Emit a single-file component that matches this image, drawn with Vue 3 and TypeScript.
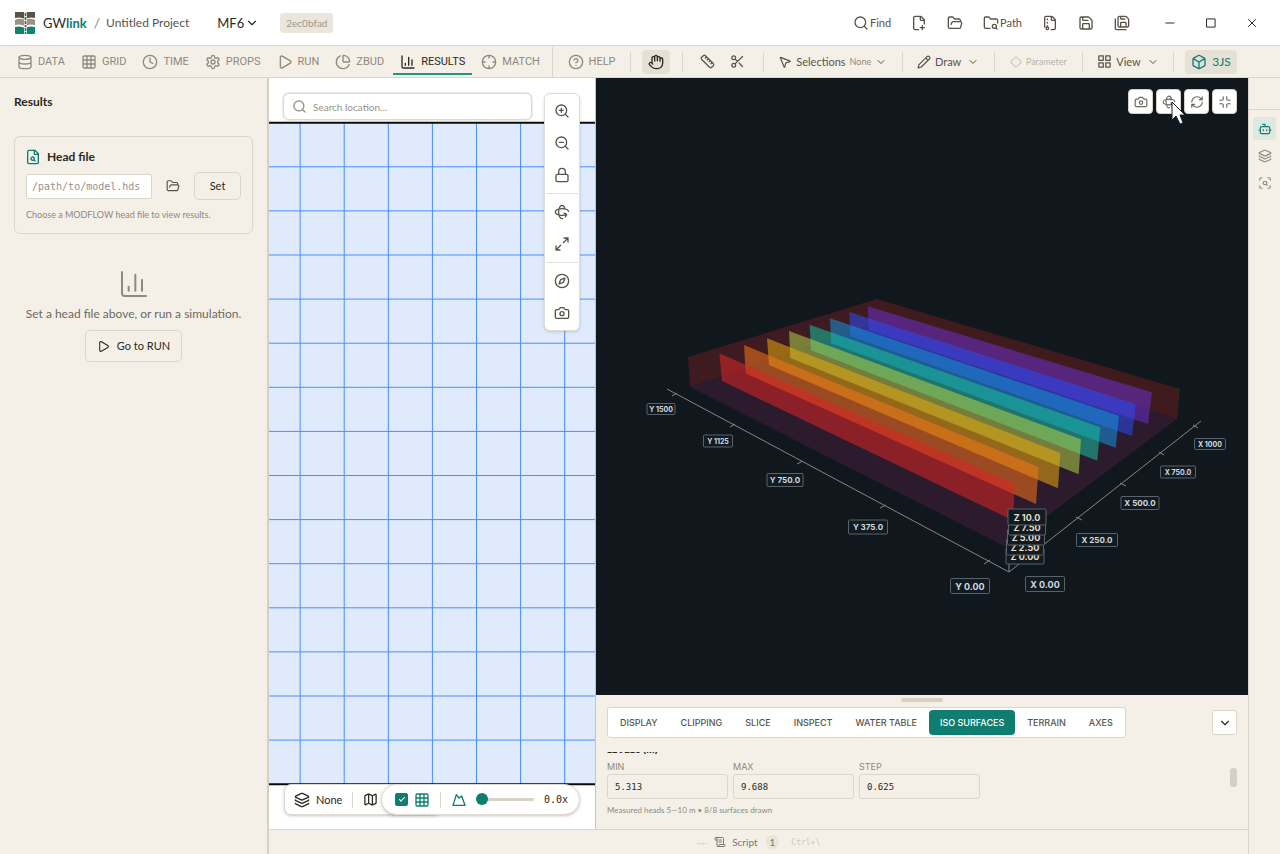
<script setup lang="ts">
import { h, ref, type FunctionalComponent } from 'vue'

const circle = (cx: number, cy: number, r: number): string =>
  `M${cx - r} ${cy}a${r} ${r} 0 1 0 ${2 * r} 0a${r} ${r} 0 1 0 ${-2 * r} 0`

const paths: Record<string, string> = {
  data: 'M3 5a9 3 0 1 0 18 0a9 3 0 1 0-18 0M3 5V19A9 3 0 0 0 21 19V5M3 12A9 3 0 0 0 21 12',
  grid: 'M5 3h14a2 2 0 0 1 2 2v14a2 2 0 0 1-2 2H5a2 2 0 0 1-2-2V5a2 2 0 0 1 2-2zM3 9h18M3 15h18M9 3v18M15 3v18',
  time: circle(12, 12, 10) + 'M12 6v6l4 2',
  props:
    'M12.22 2h-.44a2 2 0 0 0-2 2v.18a2 2 0 0 1-1 1.73l-.43.25a2 2 0 0 1-2 0l-.15-.08a2 2 0 0 0-2.73.73l-.22.38a2 2 0 0 0 .73 2.73l.15.1a2 2 0 0 1 1 1.72v.51a2 2 0 0 1-1 1.74l-.15.09a2 2 0 0 0-.73 2.73l.22.38a2 2 0 0 0 2.73.73l.15-.08a2 2 0 0 1 2 0l.43.25a2 2 0 0 1 1 1.73V20a2 2 0 0 0 2 2h.44a2 2 0 0 0 2-2v-.18a2 2 0 0 1 1-1.73l.43-.25a2 2 0 0 1 2 0l.15.08a2 2 0 0 0 2.73-.73l.22-.39a2 2 0 0 0-.73-2.73l-.15-.08a2 2 0 0 1-1-1.74v-.5a2 2 0 0 1 1-1.74l.15-.09a2 2 0 0 0 .73-2.73l-.22-.38a2 2 0 0 0-2.73-.73l-.15.08a2 2 0 0 1-2 0l-.43-.25a2 2 0 0 1-1-1.73V4a2 2 0 0 0-2-2z' +
    circle(12, 12, 3),
  run: 'M5 5a2 2 0 0 1 3.008-1.728l11.997 6.998a2 2 0 0 1 .003 3.458l-12 7A2 2 0 0 1 5 19z',
  zbud: 'M21 12c.552 0 1.005-.449.95-.998a10 10 0 0 0-8.953-8.951c-.55-.055-.998.398-.998.95v8a1 1 0 0 0 1 1zM21.21 15.89A10 10 0 1 1 8 2.83',
  results: 'M3 3v16a2 2 0 0 0 2 2h16M18 17V9M13 17V5M8 17v-3',
  match: circle(12, 12, 10) + 'M22 12h-4M6 12H2M12 6V2M12 22v-4',
  help: circle(12, 12, 10) + 'M9.09 9a3 3 0 0 1 5.83 1c0 2-3 3-3 3M12 17h.01',
  hand: 'M18 11V6a2 2 0 0 0-4 0M14 10V4a2 2 0 0 0-4 0v2M10 10.5V6a2 2 0 0 0-4 0v8M18 8a2 2 0 1 1 4 0v6a8 8 0 0 1-8 8h-2c-2.8 0-4.5-.86-5.99-2.34l-3.6-3.6a2 2 0 0 1 2.83-2.82L7 15',
  ruler:
    'M21.3 15.3a2.4 2.4 0 0 1 0 3.4l-2.6 2.6a2.4 2.4 0 0 1-3.4 0L2.7 8.7a2.41 2.41 0 0 1 0-3.4l2.6-2.6a2.41 2.41 0 0 1 3.4 0ZM14.5 12.5l2-2M11.5 9.5l2-2M8.5 6.5l2-2M17.5 15.5l2-2',
  scissors: circle(6, 6, 3) + 'M8.12 8.12 12 12M20 4 8.12 15.88' + circle(6, 18, 3) + 'M14.8 14.8 20 20',
  pointer:
    'M4.037 4.688a.495.495 0 0 1 .651-.651l16 6.5a.5.5 0 0 1-.063.947l-6.124 1.58a2 2 0 0 0-1.438 1.435l-1.579 6.126a.5.5 0 0 1-.947.063z',
  pencil:
    'M21.174 6.812a1 1 0 0 0-3.986-3.987L3.842 16.174a2 2 0 0 0-.5.83l-1.321 4.352a.5.5 0 0 0 .623.622l4.353-1.32a2 2 0 0 0 .83-.497zM15 5l4 4',
  diamond:
    'M2.7 10.3a2.41 2.41 0 0 0 0 3.41l7.59 7.59a2.41 2.41 0 0 0 3.41 0l7.59-7.59a2.41 2.41 0 0 0 0-3.41l-7.59-7.59a2.41 2.41 0 0 0-3.41 0Z',
  view: 'M4 3h6v7H3V4a1 1 0 0 1 1-1zM14 3h6a1 1 0 0 1 1 1v6h-7zM14 14h7v6a1 1 0 0 1-1 1h-6zM3 14h7v7H4a1 1 0 0 1-1-1z',
  box: 'M21 8a2 2 0 0 0-1-1.73l-7-4a2 2 0 0 0-2 0l-7 4A2 2 0 0 0 3 8v8a2 2 0 0 0 1 1.73l7 4a2 2 0 0 0 2 0l7-4A2 2 0 0 0 21 16ZM3.3 7l8.7 5 8.7-5M12 22V12',
  chevron: 'M6 9l6 6 6-6',
  search: circle(11, 11, 8) + 'M21 21l-4.3-4.3',
  filePlus:
    'M11.35 22H6a2 2 0 0 1-2-2V4a2 2 0 0 1 2-2h8a2.4 2.4 0 0 1 1.706.706l3.588 3.588A2.4 2.4 0 0 1 20 8v5.35M14 2v5a1 1 0 0 0 1 1h5M14 19h6M17 16v6',
  folder:
    'M6 14l1.5-2.9A2 2 0 0 1 9.24 10H20a2 2 0 0 1 1.94 2.5l-1.54 6a2 2 0 0 1-1.95 1.5H4a2 2 0 0 1-2-2V5a2 2 0 0 1 2-2h3.9a2 2 0 0 1 1.69.9l.81 1.2a2 2 0 0 0 1.67.9H18a2 2 0 0 1 2 2v2',
  folderSearch:
    'M10.7 20H4a2 2 0 0 1-2-2V5a2 2 0 0 1 2-2h3.9a2 2 0 0 1 1.69.9l.81 1.2a2 2 0 0 0 1.67.9H20a2 2 0 0 1 2 2v4.1M21 21l-1.9-1.9' +
    circle(17, 17, 3),
  archive:
    'M14 2v5a1 1 0 0 0 1 1h5M14 22h4a2 2 0 0 0 2-2V8a2.4 2.4 0 0 0-.706-1.706l-3.588-3.588A2.4 2.4 0 0 0 14 2H6a2 2 0 0 0-2 2v14M8 6v1M8 11v1M8 16v1' +
    circle(8, 20, 2),
  save: 'M15.2 3a2 2 0 0 1 1.4.6l3.8 3.8a2 2 0 0 1 .6 1.4V19a2 2 0 0 1-2 2H5a2 2 0 0 1-2-2V5a2 2 0 0 1 2-2zM17 21v-7a1 1 0 0 0-1-1H8a1 1 0 0 0-1 1v7M7 3v4a1 1 0 0 0 1 1h7',
  saveAll:
    'M10 2v3a1 1 0 0 0 1 1h5M18 18v-6a1 1 0 0 0-1-1h-6a1 1 0 0 0-1 1v6M18 22H4a2 2 0 0 1-2-2V6M8 18a2 2 0 0 1-2-2V4a2 2 0 0 1 2-2h9.172a2 2 0 0 1 1.414.586l2.828 2.828A2 2 0 0 1 22 6.828V16a2 2 0 0 1-2.01 2z',
  minimise: 'M5 12h14',
  maximise: 'M5 5h14v14H5z',
  close: 'M18 6 6 18M6 6l12 12',
  zoomIn: circle(11, 11, 8) + 'M21 21l-4.3-4.3M11 8v6M8 11h6',
  zoomOut: circle(11, 11, 8) + 'M21 21l-4.3-4.3M8 11h6',
  lock: 'M5 11h14a2 2 0 0 1 2 2v7a2 2 0 0 1-2 2H5a2 2 0 0 1-2-2v-7a2 2 0 0 1 2-2zM7 11V7a5 5 0 0 1 10 0v4',
  rotate:
    'M16.466 7.5C15.643 4.237 13.952 2 12 2 9.239 2 7 6.477 7 12s2.239 10 5 10c.342 0 .677-.069 1-.2M15.194 13.707l3.814 1.86-1.86 3.814M19 15.57c-1.804.885-4.274 1.43-7 1.43-5.523 0-10-2.239-10-5s4.477-5 10-5c4.838 0 8.873 1.718 9.8 4',
  expand: 'M15 3h6v6M21 3l-7 7M3 21l7-7M9 21H3v-6',
  compass:
    circle(12, 12, 10) +
    'M16.24 7.76l-1.804 5.411a2 2 0 0 1-1.265 1.265L7.76 16.24l1.804-5.411a2 2 0 0 1 1.265-1.265z',
  camera:
    'M14.5 4h-5L7 7H4a2 2 0 0 0-2 2v9a2 2 0 0 0 2 2h16a2 2 0 0 0 2-2V9a2 2 0 0 0-2-2h-3l-2.5-3z' +
    circle(12, 13, 3),
  refresh:
    'M3 12a9 9 0 0 1 9-9 9.75 9.75 0 0 1 6.74 2.74L21 8M21 3v5h-5M21 12a9 9 0 0 1-9 9 9.75 9.75 0 0 1-6.74-2.74L3 16M8 16H3v5',
  shrink: 'M9 3v4a2 2 0 0 1-2 2H3M21 9h-4a2 2 0 0 1-2-2V3M3 15h4a2 2 0 0 1 2 2v4M15 21v-4a2 2 0 0 1 2-2h4',
  bot: 'M12 8V4H8M6 8h12a2 2 0 0 1 2 2v8a2 2 0 0 1-2 2H6a2 2 0 0 1-2-2v-8a2 2 0 0 1 2-2zM2 14h2M20 14h2M15 13v2M9 13v2',
  layers:
    'M12.83 2.18a2 2 0 0 0-1.66 0L2.6 6.08a1 1 0 0 0 0 1.83l8.58 3.91a2 2 0 0 0 1.66 0l8.58-3.9a1 1 0 0 0 0-1.83zM2 12a1 1 0 0 0 .58.91l8.6 3.91a2 2 0 0 0 1.65 0l8.58-3.9A1 1 0 0 0 22 12M2 17a1 1 0 0 0 .58.91l8.6 3.91a2 2 0 0 0 1.65 0l8.58-3.9A1 1 0 0 0 22 17',
  scan:
    'M3 7V5a2 2 0 0 1 2-2h2M17 3h2a2 2 0 0 1 2 2v2M21 17v2a2 2 0 0 1-2 2h-2M7 21H5a2 2 0 0 1-2-2v-2M16 16l-1.9-1.9' +
    circle(12, 12, 3),
  map: 'M14.106 5.553a2 2 0 0 0 1.788 0l3.659-1.83A1 1 0 0 1 21 4.619v12.764a1 1 0 0 1-.553.894l-4.553 2.277a2 2 0 0 1-1.788 0l-4.212-2.106a2 2 0 0 0-1.788 0l-3.659 1.83A1 1 0 0 1 3 19.381V6.618a1 1 0 0 1 .553-.894l4.553-2.277a2 2 0 0 1 1.788 0zM15 5.764v15M9 3.236v15',
  terrain: 'M3 20 8 4l4 5 4-3 5 14z',
  script:
    'M15 12h-5M15 8h-5M19 17V5a2 2 0 0 0-2-2H4M8 21h12a2 2 0 0 0 2-2v-1a1 1 0 0 0-1-1H11a1 1 0 0 0-1 1v1a2 2 0 1 1-4 0V5a2 2 0 1 0-4 0v2a1 1 0 0 0 1 1h3',
  fileSearch:
    'M14 2v5a1 1 0 0 0 1 1h5M15 2H6a2 2 0 0 0-2 2v16a2 2 0 0 0 2 2h12a2 2 0 0 0 2-2V7z' +
    circle(11.5, 14.5, 2.5) +
    'M13.3 16.3 15 18',
}

const Icon: FunctionalComponent<{ name: string; size?: number; weight?: number }> = (p) =>
  h(
    'svg',
    {
      width: p.size ?? 16,
      height: p.size ?? 16,
      viewBox: '0 0 24 24',
      fill: 'none',
      stroke: 'currentColor',
      'stroke-width': p.weight ?? 2,
      'stroke-linecap': 'round',
      'stroke-linejoin': 'round',
      'aria-hidden': 'true',
    },
    [h('path', { d: paths[p.name] })],
  )
Icon.props = ['name', 'size', 'weight']

const tabs = [
  { id: 'data', label: 'DATA' },
  { id: 'grid', label: 'GRID' },
  { id: 'time', label: 'TIME' },
  { id: 'props', label: 'PROPS' },
  { id: 'run', label: 'RUN' },
  { id: 'zbud', label: 'ZBUD' },
  { id: 'results', label: 'RESULTS' },
  { id: 'match', label: 'MATCH' },
]
const activeTab = ref('results')

const viewTabs = ['DISPLAY', 'CLIPPING', 'SLICE', 'INSPECT', 'WATER TABLE', 'ISO SURFACES', 'TERRAIN', 'AXES']
const activeView = ref('ISO SURFACES')

const engine = ref('MF6')
const headPath = ref('')
const place = ref('')
const showGrid = ref(true)
const exaggeration = ref(0)

const levels = ref([
  { id: 'min', label: 'MIN', value: '5.313' },
  { id: 'max', label: 'MAX', value: '9.688' },
  { id: 'step', label: 'STEP', value: '0.625' },
])

const mapTools = [
  [
    { icon: 'zoomIn', label: 'Zoom in' },
    { icon: 'zoomOut', label: 'Zoom out' },
    { icon: 'lock', label: 'Lock view' },
  ],
  [
    { icon: 'rotate', label: 'Rotate' },
    { icon: 'expand', label: 'Fit extent' },
  ],
  [
    { icon: 'compass', label: 'North up' },
    { icon: 'camera', label: 'Capture map' },
  ],
]

// Model grid in map pixels: 15 rows of square cells.
const cell = 44.1
const gridTop = 44.7
const gridBottom = gridTop + cell * 15
const columns = Array.from({ length: 60 }, (_, i) => 31.1 + i * cell)
const rows = Array.from({ length: 14 }, (_, i) => gridTop + (i + 1) * cell)

// Head iso surfaces, back to front.
const surfaces = [
  { color: '#6b2dc8', points: '867.7,306.3 1152,392.3 1148,424 868.7,330' },
  { color: '#2c4cf0', points: '849.3,312 1135.7,404 1132,436 850.2,336' },
  { color: '#1691da', points: '830,318.3 1119,415.7 1115.7,447.7 831,343.3' },
  { color: '#16c19e', points: '809.7,324.7 1100.3,427.3 1097.3,460.7 811,350.3' },
  { color: '#b0cf48', points: '789,331 1081,439.3 1078.7,474.3 790.3,358' },
  { color: '#e9a90d', points: '767,338.3 1060.3,453 1058,488.3 769,365' },
  { color: '#f57418', points: '744,345 1038.7,467 1036,504 745.6,373.3' },
  { color: '#dc2626', points: '719.3,353.3 1015,483.7 1012.7,520.3 722,381' },
]

interface AxisLabel { text: string; x: number; y: number; w: number; h: number; size: number; z?: boolean }
const axisLabels: AxisLabel[] = [
  { text: 'Y 1500', x: 661, y: 409, w: 28, h: 11, size: 7 },
  { text: 'Y 1125', x: 718, y: 441, w: 29, h: 12, size: 7 },
  { text: 'Y 750.0', x: 785, y: 480, w: 36, h: 13, size: 8 },
  { text: 'Y 375.0', x: 868, y: 527, w: 39, h: 14, size: 8 },
  { text: 'Y 0.00', x: 970, y: 586, w: 39, h: 15, size: 9 },
  { text: 'X 0.00', x: 1045, y: 584, w: 39, h: 15, size: 9 },
  { text: 'X 250.0', x: 1097, y: 540, w: 41, h: 13, size: 8 },
  { text: 'X 500.0', x: 1140, y: 503, w: 38, h: 13, size: 8 },
  { text: 'X 750.0', x: 1178, y: 472, w: 35, h: 12, size: 7 },
  { text: 'X 1000', x: 1210, y: 444, w: 31, h: 11, size: 7 },
  { text: 'Z 0.00', x: 1025, y: 556, w: 38, h: 16, size: 9, z: true },
  { text: 'Z 2.50', x: 1025, y: 547, w: 37, h: 16, size: 9, z: true },
  { text: 'Z 5.00', x: 1026, y: 537, w: 37, h: 16, size: 9, z: true },
  { text: 'Z 7.50', x: 1027, y: 527, w: 37, h: 16, size: 9, z: true },
  { text: 'Z 10.0', x: 1027, y: 517, w: 38, h: 16, size: 9, z: true },
]
</script>

<template>
  <div class="app">
    <header class="titlebar">
      <svg class="logo" width="22" height="22" viewBox="0 0 22 22" aria-hidden="true">
        <path fill="#57534a" d="M1 0h20v6q-4-1-7 0-3 1-6 0-3-1-7 0z" />
        <path fill="#9a9287" d="M1 8q4-2 7-1 3 1 6 0 3-1 7 1v5q-4-1-7 0-3 1-6 0-3-1-7 0z" />
        <path fill="#0f8272" d="M1 15q4-1 7 0 3 1 6 0 3-1 7 0v6a1 1 0 0 1-1 1H2a1 1 0 0 1-1-1z" />
        <path fill="#e9e5dd" d="M10 0h3v22h-3z" />
        <path stroke="#57534a" stroke-width="1.500" stroke-dasharray="3 1" d="M11.500 1v14" />
        <path stroke="#0f8272" stroke-width="1.500" stroke-dasharray="3 1" d="M11.500 16v6" />
      </svg>
      <span class="brand">GW<b>link</b></span>
      <span class="slash">/</span>
      <span class="project">Untitled Project</span>
      <label class="engine">
        <select v-model="engine" aria-label="Model engine">
          <option>MF6</option>
        </select>
        <Icon name="chevron" :size="14" />
      </label>
      <span class="hash">2ec0bfad</span>
      <nav class="file-actions" aria-label="File">
        <button type="button"><Icon name="search" />Find</button>
        <button type="button" aria-label="New project"><Icon name="filePlus" /></button>
        <button type="button" aria-label="Open project"><Icon name="folder" /></button>
        <button type="button"><Icon name="folderSearch" />Path</button>
        <button type="button" aria-label="Archive"><Icon name="archive" /></button>
        <button type="button" aria-label="Save"><Icon name="save" /></button>
        <button type="button" aria-label="Save all"><Icon name="saveAll" /></button>
      </nav>
      <div class="window-actions">
        <button type="button" aria-label="Minimise"><Icon name="minimise" :size="14" :weight="1.7" /></button>
        <button type="button" aria-label="Maximise"><Icon name="maximise" :size="14" :weight="1.7" /></button>
        <button type="button" aria-label="Close"><Icon name="close" :size="14" :weight="1.7" /></button>
      </div>
    </header>

    <div class="toolbar">
      <nav class="tabs" aria-label="Workflow">
        <button
          v-for="t in tabs"
          :key="t.id"
          type="button"
          class="tab"
          :class="{ active: t.id === activeTab }"
          @click="activeTab = t.id"
        >
          <Icon :name="t.id" />{{ t.label }}
        </button>
      </nav>
      <div class="cell-tall help"><button type="button" class="tab"><Icon name="help" />HELP</button></div>
      <div class="cell pan"><button type="button" class="square on" aria-label="Pan"><Icon name="hand" /></button></div>
      <div class="cell edit">
        <button type="button" class="square" aria-label="Measure"><Icon name="ruler" :size="15" /></button>
        <button type="button" class="square" aria-label="Cut"><Icon name="scissors" :size="15" /></button>
      </div>
      <div class="cell menu selections">
        <button type="button"><Icon name="pointer" :size="14" />Selections<small>None</small><Icon name="chevron" :size="12" /></button>
      </div>
      <div class="cell menu draw">
        <button type="button"><Icon name="pencil" :size="14" />Draw<Icon class="push" name="chevron" :size="12" /></button>
      </div>
      <div class="cell menu parameter">
        <button type="button" disabled><Icon name="diamond" :size="12" />Parameter</button>
      </div>
      <div class="cell menu view">
        <button type="button"><Icon name="view" :size="15" />View<Icon class="push" name="chevron" :size="12" /></button>
      </div>
      <div class="cell three">
        <button type="button" class="three-btn"><Icon name="box" />3JS</button>
      </div>
    </div>

    <div class="body">
      <aside class="side">
        <h1>Results</h1>
        <section class="card">
          <h2><Icon name="fileSearch" />Head file</h2>
          <div class="path-row">
            <input v-model="headPath" type="text" placeholder="/path/to/model.hds" aria-label="Head file path" />
            <button type="button" class="browse" aria-label="Browse"><Icon name="folder" :size="14" /></button>
            <button type="button" class="outline">Set</button>
          </div>
          <p>Choose a MODFLOW head file to view results.</p>
        </section>
        <div class="empty">
          <Icon name="results" :size="32" :weight="1.5" />
          <p>Set a head file above, or run a simulation.</p>
          <button type="button" class="outline go"><Icon name="run" :size="13" />Go to RUN</button>
        </div>
      </aside>

      <div class="centre">
        <main class="workspace">
          <section class="map" aria-label="Map">
            <svg class="map-canvas" width="100%" height="100%" aria-hidden="true">
              <rect x="0" :y="gridTop" width="100%" :height="gridBottom - gridTop" fill="#dfebfd" />
              <g stroke="#4a8dfb" stroke-width="1">
                <line v-for="x in columns" :key="x" :x1="x" :x2="x" :y1="gridTop" :y2="gridBottom" />
                <line v-for="y in rows" :key="y" x1="0" x2="100%" :y1="y" :y2="y" />
              </g>
              <g stroke="#0b0b0c" stroke-width="2">
                <line x1="0" x2="100%" :y1="gridTop" :y2="gridTop" />
                <line x1="0" x2="100%" :y1="gridBottom" :y2="gridBottom" />
              </g>
            </svg>
            <div class="map-top">
              <label class="search">
                <Icon name="search" :size="15" />
                <input v-model="place" type="text" placeholder="Search location..." aria-label="Search location" />
              </label>
              <div class="map-tools">
                <div v-for="(group, i) in mapTools" :key="i" class="tool-group">
                  <button v-for="t in group" :key="t.icon" type="button" :aria-label="t.label">
                    <Icon :name="t.icon" />
                  </button>
                </div>
              </div>
            </div>
            <div class="map-bottom">
              <div class="basemap">
                <button type="button"><Icon name="layers" />None</button>
                <i></i>
                <button type="button" aria-label="Base map"><Icon name="map" :size="15" /></button>
              </div>
              <div class="overlay-bar">
                <input v-model="showGrid" type="checkbox" aria-label="Show grid" />
                <Icon name="grid" />
                <i></i>
                <Icon name="terrain" />
                <input v-model.number="exaggeration" type="range" min="0" max="10" step="0.1" aria-label="Vertical exaggeration" />
                <output>{{ exaggeration.toFixed(1) }}x</output>
              </div>
            </div>
          </section>

          <section class="scene-col">
            <div class="scene">
              <svg class="scene-canvas" viewBox="596 78 652 617" role="img" aria-label="Iso surfaces">
                <polygon points="690,387 877,323 1177,419 1006,547" fill="#2c1a2d" />
                <polygon points="688,357 877,299 877,323 690,387" fill="#3d1b20" />
                <polygon points="877,299 1180,389 1177,419 877,323" fill="#3f1b1e" />
                <polygon v-for="s in surfaces" :key="s.color" :points="s.points" :fill="s.color" fill-opacity="0.55" />
                <g fill="none" stroke="#7f878c" stroke-width="1">
                  <path d="M667 389 1009 572 1201 421M1009 572 1009 520" />
                  <path d="M672 396l5-3M730 427l5-3M797 464l6-3M880 508l6-3M984 564l6-4" />
                  <path d="M1193 425l5 3M1159 452l5 3M1120 483l6 3M1076 517l6 3" />
                </g>
                <g
                  v-for="l in axisLabels"
                  :key="l.text"
                  class="axis-label"
                  :class="{ z: l.z }"
                >
                  <rect :x="l.x - l.w / 2" :y="l.y - l.h / 2" :width="l.w" :height="l.h" rx="1" />
                  <text :x="l.x" :y="l.y" :font-size="l.size">{{ l.text }}</text>
                </g>
              </svg>
              <div class="scene-tools">
                <button type="button" aria-label="Capture scene"><Icon name="camera" :size="14" /></button>
                <button type="button" class="hovered" aria-label="Orbit">
                  <Icon name="rotate" :size="14" />
                  <svg class="cursor" width="15" height="24" viewBox="0 0 15 24" aria-hidden="true">
                    <path d="M1 1v18l4-4 4 8 3-1-3-8h5z" fill="#fff" stroke="#1b2026" stroke-width="1" />
                  </svg>
                </button>
                <button type="button" aria-label="Reset view"><Icon name="refresh" :size="14" /></button>
                <button type="button" aria-label="Exit full view"><Icon name="shrink" :size="14" /></button>
              </div>
            </div>
            <div class="dock">
              <span class="grip"></span>
              <div class="dock-head">
                <div class="view-tabs">
                  <button
                    v-for="v in viewTabs"
                    :key="v"
                    type="button"
                    :class="{ active: v === activeView }"
                    @click="activeView = v"
                  >{{ v }}</button>
                </div>
                <button type="button" class="collapse" aria-label="Collapse"><Icon name="chevron" :size="14" /></button>
              </div>
              <div class="dock-body">
                <div class="levels">
                  <h3>LEVELS (M)</h3>
                  <div class="fields">
                    <label v-for="f in levels" :key="f.id">
                      {{ f.label }}
                      <input v-model="f.value" type="text" />
                    </label>
                  </div>
                  <p>Measured heads 5—10 m • 8/8 surfaces drawn</p>
                </div>
                <span class="thumb"></span>
              </div>
            </div>
          </section>
        </main>
        <footer class="status">
          <span class="dots">····</span>
          <button type="button"><Icon name="script" :size="12" />Script</button>
          <span class="count">1</span>
          <kbd>Ctrl+\</kbd>
        </footer>
      </div>

      <aside class="rail" aria-label="Panels">
        <div class="rail-gap"></div>
        <button type="button" class="on" aria-label="Assistant"><Icon name="bot" :size="14" /></button>
        <button type="button" aria-label="Layers"><Icon name="layers" :size="14" /></button>
        <button type="button" aria-label="Inspect"><Icon name="scan" :size="14" /></button>
      </aside>
    </div>
  </div>
</template>

<style>
body {
  margin: 0;
}
</style>

<style scoped>
.app {
  --sand: #f4f0e8;
  --line: #dbd5ca;
  --ink: #2b2824;
  --mid: #57534a;
  --soft: #8f887d;
  --teal: #0f7d6f;
  display: flex;
  flex-direction: column;
  height: 100vh;
  overflow: hidden;
  background: var(--sand);
  color: var(--ink);
  font: 12px/16px Lato, "Liberation Sans", sans-serif;
}
.app *,
.app *::before {
  box-sizing: border-box;
}
svg {
  flex: none;
  display: block;
}
button {
  display: inline-flex;
  align-items: center;
  justify-content: center;
  margin: 0;
  padding: 0;
  border: 0;
  background: none;
  color: inherit;
  font: inherit;
  white-space: nowrap;
}
input,
select {
  margin: 0;
  border: 0;
  padding: 0;
  background: none;
  color: inherit;
  font: inherit;
  outline: 0;
}
h1, h2, h3, p {
  margin: 0;
  font-size: 12px;
}

/* title bar */
.titlebar {
  display: flex;
  align-items: center;
  flex: none;
  height: 46px;
  padding: 0 8px 0 14px;
  border-bottom: 1px solid var(--line);
  background: #fff;
}
.brand {
  margin-left: 7px;
  font-size: 13px;
}
.brand b {
  color: var(--teal);
  font-weight: 700;
}
.slash {
  margin: 0 6px 0 7px;
  color: var(--soft);
  font-size: 14px;
}
.project {
  color: var(--mid);
  font-size: 12px;
}
.engine {
  display: flex;
  align-items: center;
  margin-left: 28px;
}
.engine select {
  appearance: none;
  width: 28px;
  font-size: 13px;
}
.hash {
  margin-left: 21px;
  padding: 2px 6px;
  border-radius: 3px;
  background: #ebe6db;
  color: #9d968b;
  font-size: 10px;
}
.file-actions {
  display: flex;
  align-items: center;
  gap: 20px;
  margin-left: auto;
  color: var(--mid);
}
.file-actions button {
  gap: 1px;
  font-size: 11px;
}
.window-actions {
  display: flex;
  gap: 1px;
  margin-left: 20px;
}
.window-actions button {
  width: 40px;
  height: 30px;
}

/* toolbar */
.toolbar {
  display: flex;
  align-items: center;
  flex: none;
  height: 32px;
  padding: 0 43px 0 10px;
  border-bottom: 1px solid var(--line);
}
.tabs {
  display: flex;
  flex: none;
  gap: 2px;
}
.tab {
  gap: 5px;
  height: 26px;
  padding: 2px 7px 0;
  border-bottom: 2px solid transparent;
  color: var(--soft);
  font-family: Roboto, sans-serif;
  font-size: 11px;
}
.tab.active {
  border-bottom-color: #219484;
  color: var(--ink);
}
.cell,
.cell-tall {
  display: flex;
  align-items: center;
  justify-content: center;
  height: 20px;
  border-left: 1px solid var(--line);
  color: var(--mid);
}
.cell-tall {
  height: 30px;
}
.help {
  flex: 78 1 0;
  min-width: 0;
  margin-left: 5px;
}
.pan { flex: 51 1 0; }
.edit { flex: 81 1 0; gap: 2px; }
.selections { flex: 139 1 0; }
.draw { flex: 92 1 0; }
.parameter { flex: 88 1 0; }
.view { flex: 91 1 0; }
.three { padding-left: 11px; }
.square {
  width: 28px;
  height: 24px;
  border-radius: 4px;
}
.square.on {
  background: #e5e0d4;
  color: var(--ink);
}
.menu button {
  gap: 4px;
  font-size: 11px;
}
.menu small {
  font-size: 9px;
  color: var(--soft);
}
.menu .push {
  margin-left: 2px;
}
.parameter button {
  color: #b9b2a6;
  font-size: 9px;
}
.three-btn {
  gap: 5px;
  width: 52px;
  height: 24px;
  border-radius: 4px;
  background: #e5e1d6;
  color: var(--teal);
}

/* body */
.body {
  display: flex;
  flex: 1;
  min-height: 0;
}
.side {
  flex: none;
  width: 269px;
  padding: 16px 14px 0 14px;
  border-right: 2px solid #d6cfc4;
}
h1 {
  font-weight: 700;
}
.card {
  margin-top: 26px;
  padding: 11px;
  border: 1px solid var(--line);
  border-radius: 6px;
}
.card h2 {
  display: flex;
  align-items: center;
  gap: 6px;
  margin: 1px 0 7px -1px;
  font-weight: 700;
}
.card h2 svg {
  color: var(--teal);
}
.path-row {
  display: flex;
  align-items: center;
}
.path-row input {
  flex: 1;
  min-width: 0;
  height: 25px;
  padding: 0 5px;
  border: 1px solid var(--line);
  border-radius: 2px;
  background: #fff;
  font: 10px "DejaVu Sans Mono", monospace;
}
input::placeholder {
  color: #98928a;
  opacity: 1;
}
.browse {
  width: 42px;
  height: 28px;
  color: var(--mid);
}
.outline {
  width: 47px;
  height: 28px;
  border: 1px solid var(--line);
  border-radius: 5px;
  font-size: 11px;
}
.card p {
  margin-top: 7px;
  color: var(--soft);
  font-size: 9px;
  line-height: 15px;
}
.empty {
  display: flex;
  flex-direction: column;
  align-items: center;
  margin-top: 34px;
  color: var(--soft);
}
.empty p {
  margin-top: 6px;
  color: #6e685e;
  font-size: 12px;
}
.outline.go {
  gap: 7px;
  width: 97px;
  height: 32px;
  margin-top: 8px;
  color: var(--ink);
}

.centre {
  display: flex;
  flex: 1;
  flex-direction: column;
  min-width: 0;
}
.workspace {
  display: flex;
  flex: 1;
  min-height: 0;
}

/* map */
.map {
  position: relative;
  display: flex;
  flex: 1 1 0;
  flex-direction: column;
  justify-content: space-between;
  min-width: 0;
  border-right: 1px solid #c9c4bb;
  background: #fff;
}
.map-canvas {
  position: absolute;
  inset: 0;
}
.map-top {
  position: relative;
  display: flex;
  align-items: flex-start;
  gap: 12px;
  padding: 15px 15px 0 14px;
}
.search {
  display: flex;
  flex: 1;
  align-items: center;
  gap: 6px;
  min-width: 0;
  height: 27px;
  padding: 0 8px;
  border: 1px solid #dedad1;
  border-radius: 6px;
  background: #fff;
  color: var(--soft);
  box-shadow: 0 0 1px 1px #eeeae3;
}
.search input {
  flex: 1;
  min-width: 0;
  font-size: 10px;
}
.map-tools {
  width: 36px;
  padding: 1px;
  border: 1px solid #e2ddd4;
  border-radius: 6px;
  background: #fff;
  color: var(--mid);
  box-shadow: 0 1px 3px rgba(40, 36, 30, 0.18);
}
.tool-group button {
  width: 32px;
  height: 32px;
}
.tool-group + .tool-group {
  margin-top: 2px;
  padding-top: 2px;
  border-top: 1px solid #e2ddd3;
}
.map-bottom {
  position: relative;
  display: flex;
  padding: 0 15px 14px;
}
.basemap,
.overlay-bar {
  display: flex;
  align-items: center;
  height: 31px;
  border: 1px solid #e0dbd2;
  background: #fff;
  box-shadow: 0 1px 3px rgba(40, 36, 30, 0.25);
}
.basemap {
  flex: 1 1 0;
  min-width: 0;
  margin-right: -60px;
  padding-left: 9px;
  border-radius: 7px;
}
.basemap button:first-child {
  gap: 6px;
  font-size: 11px;
}
.map-bottom i {
  width: 1px;
  height: 16px;
  margin: 0 10px;
  background: var(--line);
}
.overlay-bar {
  position: relative;
  flex: none;
  width: 199px;
  padding: 0 11px 0 13px;
  border-radius: 16px;
  color: var(--teal);
}
input[type="checkbox"] {
  appearance: none;
  display: grid;
  place-items: center;
  flex: none;
  width: 13px;
  height: 13px;
  margin-right: 6px;
  border: 1px solid var(--teal);
  border-radius: 2px;
}
input[type="checkbox"]:checked {
  background: var(--teal);
}
input[type="checkbox"]:checked::before {
  content: "";
  width: 6px;
  height: 3px;
  margin-top: -2px;
  border: solid #fff;
  border-width: 0 0 1px 1px;
  transform: rotate(-45deg);
}
input[type="range"] {
  appearance: none;
  flex: none;
  width: 58px;
  height: 12px;
  margin-left: 9px;
}
input[type="range"]::-webkit-slider-runnable-track {
  height: 3px;
  border-radius: 2px;
  background: #d8d2c7;
}
input[type="range"]::-webkit-slider-thumb {
  appearance: none;
  width: 12px;
  height: 12px;
  margin-top: -5px;
  border-radius: 50%;
  background: var(--teal);
}
output {
  margin-left: auto;
  color: var(--ink);
  font: 10px "DejaVu Sans Mono", monospace;
}

/* 3D scene */
.scene-col {
  display: flex;
  flex: 2 1 0;
  flex-direction: column;
  min-width: 0;
}
.scene {
  position: relative;
  flex: 1;
  min-height: 0;
  background: #10181e;
}
.scene-canvas {
  width: 100%;
  height: 100%;
}
.axis-label rect {
  fill: #121b21;
  stroke: #596268;
  stroke-width: 1;
}
.axis-label text {
  fill: #d3dce0;
  font-family: Inter, sans-serif;
  font-weight: 700;
  text-anchor: middle;
  dominant-baseline: central;
}
.axis-label.z text {
  fill: #e6dfca;
}
.scene-tools {
  position: absolute;
  top: 11px;
  right: 11px;
  display: flex;
  gap: 3px;
}
.scene-tools button {
  position: relative;
  width: 25px;
  height: 25px;
  border: 1px solid #d6d1c8;
  border-radius: 4px;
  background: #fff;
  color: #6b665e;
}
.cursor {
  position: absolute;
  top: 11px;
  left: 14px;
}

/* dock */
.dock {
  display: flex;
  flex: none;
  flex-direction: column;
  height: 134px;
  padding: 3px 11px 0;
}
.grip {
  align-self: center;
  width: 42px;
  height: 4px;
  border-radius: 2px;
  background: #d8d0c5;
}
.dock-head {
  display: flex;
  align-items: center;
  justify-content: space-between;
  margin-top: 5px;
}
.view-tabs {
  display: flex;
  gap: 1px;
  padding: 2px 1px;
  border: 1px solid var(--line);
  border-radius: 3px;
  background: #fff;
}
.view-tabs button {
  height: 25px;
  padding: 0 11px;
  border-radius: 4px;
  color: var(--mid);
  font: 500 9px Inter, sans-serif;
}
.view-tabs button.active {
  background: var(--teal);
  color: #fff;
}
.collapse {
  width: 25px;
  height: 25px;
  border: 1px solid var(--line);
  border-radius: 3px;
  background: #fff;
}
.dock-body {
  display: flex;
  flex: 1;
  justify-content: space-between;
  min-height: 0;
  margin-top: 14px;
  overflow: hidden;
}
.levels {
  margin-top: -8px;
  color: var(--soft);
}
h3 {
  color: var(--ink);
  font: 700 9px/11px Inter, sans-serif;
}
.fields {
  display: flex;
  gap: 5px;
  margin-top: 6px;
}
.fields label {
  display: flex;
  flex-direction: column;
  gap: 1px;
  font: 9px/12px Inter, sans-serif;
}
.fields input {
  width: 121px;
  height: 25px;
  padding: 0 7px;
  border: 1px solid var(--line);
  border-radius: 3px;
  color: var(--ink);
  font: 9px "DejaVu Sans Mono", monospace;
}
.levels p {
  margin-top: 3px;
  font-size: 8px;
}
.thumb {
  width: 7px;
  height: 19px;
  margin-top: 16px;
  border-radius: 3px;
  background: #d5cec4;
}

/* status bar */
.status {
  display: flex;
  flex: none;
  align-items: center;
  justify-content: center;
  height: 25px;
  border-top: 1px solid var(--line);
  color: #7d766b;
  font-size: 10px;
}
.status .dots {
  margin-right: 7px;
  color: #cfc8bc;
}
.status button {
  gap: 6px;
}
.count {
  margin: 0 12px 0 8px;
  padding: 0 4px;
  border-radius: 7px;
  background: #eae5da;
  line-height: 14px;
}
kbd {
  color: #cfc8bc;
  font: 8px "DejaVu Sans Mono", monospace;
}

/* right rail */
.rail {
  display: flex;
  flex: none;
  flex-direction: column;
  align-items: center;
  width: 32px;
  border-left: 1px solid var(--line);
}
.rail-gap {
  align-self: stretch;
  height: 32px;
  margin-bottom: 7px;
  border-bottom: 1px solid var(--line);
}
.rail button {
  width: 23px;
  height: 23px;
  margin-bottom: 4px;
  border-radius: 3px;
  color: var(--soft);
}
.rail .on {
  background: #dde9e0;
  color: var(--teal);
}
</style>
